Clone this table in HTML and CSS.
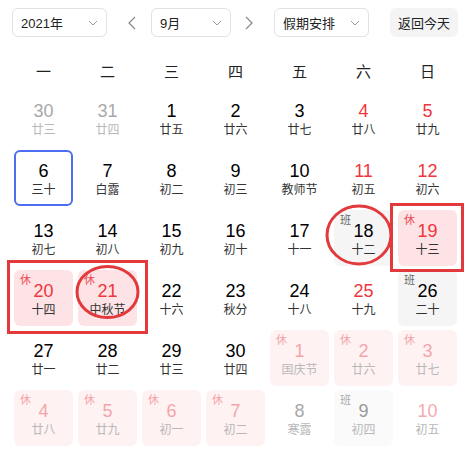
FILE: index.html
```html
<!DOCTYPE html>
<html lang="zh-CN">
<head>
<meta charset="utf-8">
<link rel="stylesheet" href="styles.css">
</head>
<body>
<div class="cal">
  <div class="toolbar">
    <div class="select sel-year"><span>2021年</span><svg class="chev" width="10" height="6" viewBox="0 0 10 6"><path d="M1 1l4 4 4-4" fill="none" stroke="#9a9a9a" stroke-width="1"/></svg></div>
    <svg class="arrow arrow-prev" width="8" height="14" viewBox="0 0 8 14"><path d="M7 1L1 7l6 6" fill="none" stroke="#888" stroke-width="1.2"/></svg>
    <div class="select sel-month"><span>9月</span><svg class="chev" width="10" height="6" viewBox="0 0 10 6"><path d="M1 1l4 4 4-4" fill="none" stroke="#9a9a9a" stroke-width="1"/></svg></div>
    <svg class="arrow arrow-next" width="8" height="14" viewBox="0 0 8 14"><path d="M1 1l6 6-6 6" fill="none" stroke="#888" stroke-width="1.2"/></svg>
    <div class="select sel-holiday"><span>假期安排</span><svg class="chev" width="10" height="6" viewBox="0 0 10 6"><path d="M1 1l4 4 4-4" fill="none" stroke="#9a9a9a" stroke-width="1"/></svg></div>
    <div class="today-btn">返回今天</div>
  </div>

  <div class="weekdays">
    <span>一</span><span>二</span><span>三</span><span>四</span><span>五</span><span>六</span><span>日</span>
  </div>

  <div class="grid">
    <div class="day other"><b>30</b><i>廿三</i></div>
    <div class="day other"><b>31</b><i>廿四</i></div>
    <div class="day"><b>1</b><i>廿五</i></div>
    <div class="day"><b>2</b><i>廿六</i></div>
    <div class="day"><b>3</b><i>廿七</i></div>
    <div class="day wkend"><b>4</b><i>廿八</i></div>
    <div class="day wkend"><b>5</b><i>廿九</i></div>

    <div class="day today"><b>6</b><i>三十</i></div>
    <div class="day"><b>7</b><i>白露</i></div>
    <div class="day"><b>8</b><i>初二</i></div>
    <div class="day"><b>9</b><i>初三</i></div>
    <div class="day"><b>10</b><i>教师节</i></div>
    <div class="day wkend"><b>11</b><i>初五</i></div>
    <div class="day wkend"><b>12</b><i>初六</i></div>

    <div class="day"><b>13</b><i>初七</i></div>
    <div class="day"><b>14</b><i>初八</i></div>
    <div class="day"><b>15</b><i>初九</i></div>
    <div class="day"><b>16</b><i>初十</i></div>
    <div class="day"><b>17</b><i>十一</i></div>
    <div class="day work"><em>班</em><b>18</b><i>十二</i></div>
    <div class="day rest"><em>休</em><b>19</b><i>十三</i></div>

    <div class="day rest"><em>休</em><b>20</b><i>十四</i></div>
    <div class="day rest"><em>休</em><b>21</b><i>中秋节</i></div>
    <div class="day"><b>22</b><i>十六</i></div>
    <div class="day"><b>23</b><i>秋分</i></div>
    <div class="day"><b>24</b><i>十八</i></div>
    <div class="day wkend"><b>25</b><i>十九</i></div>
    <div class="day work"><em>班</em><b>26</b><i>二十</i></div>

    <div class="day"><b>27</b><i>廿一</i></div>
    <div class="day"><b>28</b><i>廿二</i></div>
    <div class="day"><b>29</b><i>廿三</i></div>
    <div class="day"><b>30</b><i>廿四</i></div>
    <div class="day other rest"><em>休</em><b>1</b><i>国庆节</i></div>
    <div class="day other rest"><em>休</em><b>2</b><i>廿六</i></div>
    <div class="day other rest"><em>休</em><b>3</b><i>廿七</i></div>

    <div class="day other rest"><em>休</em><b>4</b><i>廿八</i></div>
    <div class="day other rest"><em>休</em><b>5</b><i>廿九</i></div>
    <div class="day other rest"><em>休</em><b>6</b><i>初一</i></div>
    <div class="day other rest"><em>休</em><b>7</b><i>初二</i></div>
    <div class="day other"><b>8</b><i>寒露</i></div>
    <div class="day other work"><em>班</em><b>9</b><i>初四</i></div>
    <div class="day other wkend"><b>10</b><i>初五</i></div>
  </div>

  <svg class="marks" width="470" height="452" viewBox="0 0 470 452">
    <rect x="391.5" y="204.5" width="71" height="66" fill="none" stroke="#e3393c" stroke-width="3"/>
    <rect x="8.5" y="261.5" width="138" height="71" fill="none" stroke="#e3393c" stroke-width="3"/>
    <ellipse cx="359" cy="235" rx="32" ry="29" fill="none" stroke="#e3393c" stroke-width="3"/>
    <ellipse cx="107.5" cy="292" rx="30.5" ry="25.5" fill="none" stroke="#e3393c" stroke-width="3"/>
  </svg>
</div>
</body>
</html>
```

FILE: styles.css
```css
* { box-sizing: border-box; }
html, body { margin: 0; padding: 0; background: #fff; }
body {
  font-family: "Liberation Sans", "Noto Sans CJK SC", sans-serif;
  color: #000;
  width: 470px;
  height: 452px;
  overflow: hidden;
}
.cal { position: relative; width: 470px; height: 452px; }

.toolbar {
  display: flex;
  align-items: center;
  padding: 8px 0 0 12px;
  height: 37px;
}
.select {
  height: 29px;
  border: 1px solid #e2e2e2;
  border-radius: 6px;
  display: flex;
  align-items: center;
  justify-content: space-between;
  padding: 0 8px 0 8px;
  font-size: 13px;
  color: #222;
}
.sel-year { width: 95px; }
.sel-month { width: 80px; }
.sel-holiday { width: 95px; }
.chev { display: block; }
.arrow { display: block; }
.arrow-prev { margin: 0 15px 0 21px; }
.arrow-next { margin: 0 21px 0 14px; }
.today-btn {
  margin-left: 21px;
  width: 68px;
  height: 29px;
  border-radius: 6px;
  background: #f4f4f5;
  font-size: 13px;
  color: #222;
  display: flex;
  align-items: center;
  justify-content: center;
}

.weekdays {
  margin-top: 20px;
  padding-left: 14px;
  display: grid;
  grid-template-columns: repeat(7, 59px);
  column-gap: 5px;
  height: 30px;
  line-height: 30px;
  font-size: 15px;
  color: #222;
  text-align: center;
}

.grid {
  margin-top: 3px;
  padding-left: 14px;
  display: grid;
  grid-template-columns: repeat(7, 59px);
  grid-auto-rows: 56px;
  column-gap: 5px;
  row-gap: 4px;
}
.day {
  position: relative;
  display: flex;
  flex-direction: column;
  align-items: center;
  padding-top: 10px;
  border-radius: 6px;
  border: 2px solid transparent;
}
.day b {
  font-weight: normal;
  font-size: 18px;
  line-height: 22px;
  margin-top: -2px;
  color: #000;
}
.day i {
  font-style: normal;
  font-size: 12px;
  line-height: 16px;
  color: #333;
}
.day em {
  position: absolute;
  left: 4px;
  top: 2px;
  font-style: normal;
  font-size: 11px;
  line-height: 13px;
  color: #666;
}
.day.wkend b { color: #f0353c; }
.day.today { border-color: #4e6ef2; }
.day.work { background: #f5f5f6; }
.day.rest { background: #fde3e5; }
.day.rest b { color: #f0353c; }
.day.rest em { color: #f04a52; }

.day.other b { color: #a8a8a8; }
.day.other i { color: #b8b8b8; }
.day.other.wkend b { color: #f7a9ad; }
.day.other.rest { background: #fef2f3; }
.day.other.rest b { color: #f5a5aa; }
.day.other.rest em { color: #f4a3a8; }
.day.other.work { background: #fafafa; }
.day.other.work em { color: #aaa; }
.day.other.work b { color: #999; }

.marks {
  position: absolute;
  left: 0;
  top: 0;
  pointer-events: none;
}
```
